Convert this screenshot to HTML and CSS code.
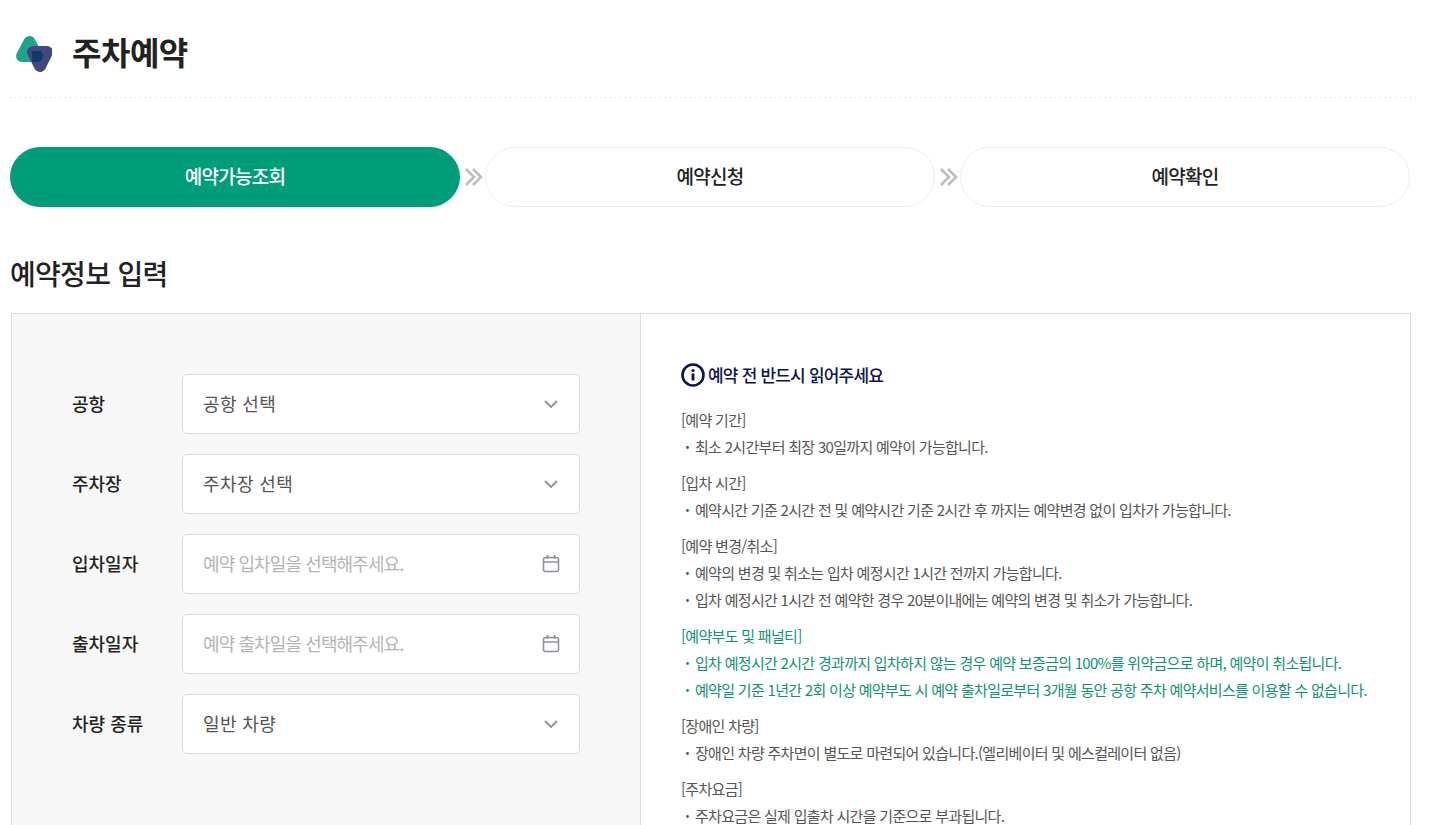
FILE: index.html
```html
<!DOCTYPE html>
<html lang="ko">
<head>
    <meta charset="UTF-8">
    <meta name="viewport" content="width=device-width, initial-scale=1.0">
    <title>주차예약</title>
    <link rel="stylesheet" href="styles.css">
</head>
<body>
    <div class="container">
        <header class="page-head">
            <svg class="logo" width="40" height="40" viewBox="0 0 40 40">
                <defs>
                    <mask id="logoOverlap">
                        <path d="M17.5 9L10 23H25z" fill="#fff" stroke="#fff" stroke-width="12" stroke-linejoin="round"/>
                    </mask>
                </defs>
                <path d="M17.5 9L10 23H25z" fill="#1fa487" stroke="#1fa487" stroke-width="12" stroke-linejoin="round"/>
                <path d="M21 19H35L28 33z" fill="#43477f" stroke="#43477f" stroke-width="12" stroke-linejoin="round"/>
                <path d="M21 19H35L28 33z" fill="#0f3a69" stroke="#0f3a69" stroke-width="12" stroke-linejoin="round" mask="url(#logoOverlap)"/>
            </svg>
            <h1>주차예약</h1>
        </header>

        <ol class="steps">
            <li class="step active">예약가능조회</li>
            <li class="step-arrow">
                <svg width="20" height="20" viewBox="0 0 20 20"><path d="M3 2l8 8-8 8M10 2l8 8-8 8" fill="none" stroke="#bdbdbd" stroke-width="2.6"/></svg>
            </li>
            <li class="step">예약신청</li>
            <li class="step-arrow">
                <svg width="20" height="20" viewBox="0 0 20 20"><path d="M3 2l8 8-8 8M10 2l8 8-8 8" fill="none" stroke="#bdbdbd" stroke-width="2.6"/></svg>
            </li>
            <li class="step">예약확인</li>
        </ol>

        <h2>예약정보 입력</h2>

        <div class="booking">
            <form class="booking-form">
                <div class="field">
                    <span class="field-label">공항</span>
                    <div class="control">
                        <span>공항 선택</span>
                        <svg class="chevron" width="16" height="10" viewBox="0 0 16 10"><path d="M2 2l6 6 6-6" fill="none" stroke="#8d90a3" stroke-width="1.8"/></svg>
                    </div>
                </div>
                <div class="field">
                    <span class="field-label">주차장</span>
                    <div class="control">
                        <span>주차장 선택</span>
                        <svg class="chevron" width="16" height="10" viewBox="0 0 16 10"><path d="M2 2l6 6 6-6" fill="none" stroke="#8d90a3" stroke-width="1.8"/></svg>
                    </div>
                </div>
                <div class="field">
                    <span class="field-label">입차일자</span>
                    <div class="control placeholder">
                        <span>예약 입차일을 선택해주세요.</span>
                        <svg class="calendar" width="18" height="20" viewBox="0 0 18 20"><path d="M3.5 3.5h11a2 2 0 0 1 2 2v10a2 2 0 0 1-2 2h-11a2 2 0 0 1-2-2v-10a2 2 0 0 1 2-2zM1.5 8h15M5.5 1v4M12.5 1v4" fill="none" stroke="#8d90a3" stroke-width="1.6"/></svg>
                    </div>
                </div>
                <div class="field">
                    <span class="field-label">출차일자</span>
                    <div class="control placeholder">
                        <span>예약 출차일을 선택해주세요.</span>
                        <svg class="calendar" width="18" height="20" viewBox="0 0 18 20"><path d="M3.5 3.5h11a2 2 0 0 1 2 2v10a2 2 0 0 1-2 2h-11a2 2 0 0 1-2-2v-10a2 2 0 0 1 2-2zM1.5 8h15M5.5 1v4M12.5 1v4" fill="none" stroke="#8d90a3" stroke-width="1.6"/></svg>
                    </div>
                </div>
                <div class="field">
                    <span class="field-label">차량 종류</span>
                    <div class="control">
                        <span>일반 차량</span>
                        <svg class="chevron" width="16" height="10" viewBox="0 0 16 10"><path d="M2 2l6 6 6-6" fill="none" stroke="#8d90a3" stroke-width="1.8"/></svg>
                    </div>
                </div>
            </form>

            <section class="notice">
                <h3>
                    <svg width="24" height="24" viewBox="0 0 24 24"><circle cx="12" cy="12" r="10.5" fill="none" stroke="#0b1450" stroke-width="2.6"/><circle cx="12" cy="7.5" r="1.6" fill="#0b1450"/><path d="M12 10.5v7" stroke="#0b1450" stroke-width="2.8"/></svg>
                    예약 전 반드시 읽어주세요
                </h3>
                <dl>
                    <dt>[예약 기간]</dt>
                    <dd>최소 2시간부터 최장 30일까지 예약이 가능합니다.</dd>
                </dl>
                <dl>
                    <dt>[입차 시간]</dt>
                    <dd>예약시간 기준 2시간 전 및 예약시간 기준 2시간 후 까지는 예약변경 없이 입차가 가능합니다.</dd>
                </dl>
                <dl>
                    <dt>[예약 변경/취소]</dt>
                    <dd>예약의 변경 및 취소는 입차 예정시간 1시간 전까지 가능합니다.</dd>
                    <dd>입차 예정시간 1시간 전 예약한 경우 20분이내에는 예약의 변경 및 취소가 가능합니다.</dd>
                </dl>
                <dl class="warn">
                    <dt>[예약부도 및 패널티]</dt>
                    <dd>입차 예정시간 2시간 경과까지 입차하지 않는 경우 예약 보증금의 100%를 위약금으로 하며, 예약이 취소됩니다.</dd>
                    <dd>예약일 기준 1년간 2회 이상 예약부도 시 예약 출차일로부터 3개월 동안 공항 주차 예약서비스를 이용할 수 없습니다.</dd>
                </dl>
                <dl>
                    <dt>[장애인 차량]</dt>
                    <dd>장애인 차량 주차면이 별도로 마련되어 있습니다.(엘리베이터 및 에스컬레이터 없음)</dd>
                </dl>
                <dl>
                    <dt>[주차요금]</dt>
                    <dd>주차요금은 실제 입출차 시간을 기준으로 부과됩니다.</dd>
                </dl>
            </section>
        </div>
    </div>
</body>
</html>
```

FILE: styles.css
```css
:root {
    --primary-color: #009d7b;
    --text-color: #222;
    --body-color: #555;
    --border-color: #ddd;
}

* {
    box-sizing: border-box;
    margin: 0;
    padding: 0;
}

html, body {
    height: 825px;
    overflow: hidden;
}

body {
    font-family: "Noto Sans CJK KR", "Noto Sans", sans-serif;
    background-color: #fff;
    color: var(--text-color);
}

.container {
    width: 1401px;
    margin-left: 10px;
}

.page-head {
    display: flex;
    align-items: center;
    gap: 20px;
    height: 98px;
    padding-left: 2px;
    padding-top: 7px;
    background: linear-gradient(to right, #d5d5d5 1px, transparent 1px) left bottom / 5px 1px repeat-x;
}

.logo {
    flex: none;
}

h1 {
    font-size: 32px;
    font-weight: 700;
    letter-spacing: -0.5px;
    line-height: 40px;
    padding-bottom: 4px;
}

.steps {
    display: flex;
    align-items: center;
    list-style: none;
    margin-top: 49px;
    width: 1400px;
}

.step {
    flex: none;
    width: 450px;
    height: 60px;
    line-height: 56px;
    text-align: center;
    font-size: 19px;
    font-weight: 500;
    letter-spacing: -0.7px;
    border: 1px solid #eee;
    border-radius: 30px;
}

.step.active {
    background-color: var(--primary-color);
    border-color: var(--primary-color);
    color: #fff;
}

.step-arrow {
    flex: none;
    width: 25px;
    display: flex;
    justify-content: center;
}

h2 {
    font-size: 28px;
    font-weight: 500;
    letter-spacing: -0.7px;
    line-height: 40px;
    margin-top: 46px;
}

.booking {
    display: flex;
    margin-top: 20px;
    margin-left: 1px;
    width: 1400px;
    height: 700px;
    border: 1px solid var(--border-color);
}

.booking-form {
    flex: none;
    width: 629px;
    padding: 60px 60px 0;
    background-color: #f7f7f7;
    border-right: 1px solid var(--border-color);
}

.field {
    display: flex;
    align-items: center;
    margin-bottom: 20px;
}

.field-label {
    flex: none;
    width: 110px;
    padding-bottom: 2px;
    font-size: 18px;
    font-weight: 500;
    letter-spacing: 0;
}

.control {
    display: flex;
    align-items: center;
    justify-content: space-between;
    width: 398px;
    height: 60px;
    padding: 0 20px;
    background-color: #fff;
    border: 1px solid var(--border-color);
    border-radius: 5px;
    font-size: 18px;
    letter-spacing: 0.4px;
    color: #555;
}

.control span {
    padding-bottom: 2px;
}

.control.placeholder {
    color: #b5b5b5;
    letter-spacing: -0.9px;
}

.calendar {
    margin-right: -1px;
}

.notice {
    flex: 1;
    padding: 46px 40px 0;
    font-size: 15px;
    line-height: 27px;
    letter-spacing: -0.7px;
    color: var(--body-color);
    white-space: nowrap;
}

h3 {
    display: flex;
    align-items: center;
    gap: 3px;
    font-size: 17px;
    font-weight: 500;
    letter-spacing: -0.8px;
    line-height: 30px;
    color: #0b1450;
    margin-bottom: 16px;
}

dl {
    margin-bottom: 9px;
}

dd {
    padding-left: 14px;
    position: relative;
}

dd::before {
    content: "·";
    position: absolute;
    left: 4px;
    font-weight: 700;
}

.warn {
    color: #0c9473;
}
```
